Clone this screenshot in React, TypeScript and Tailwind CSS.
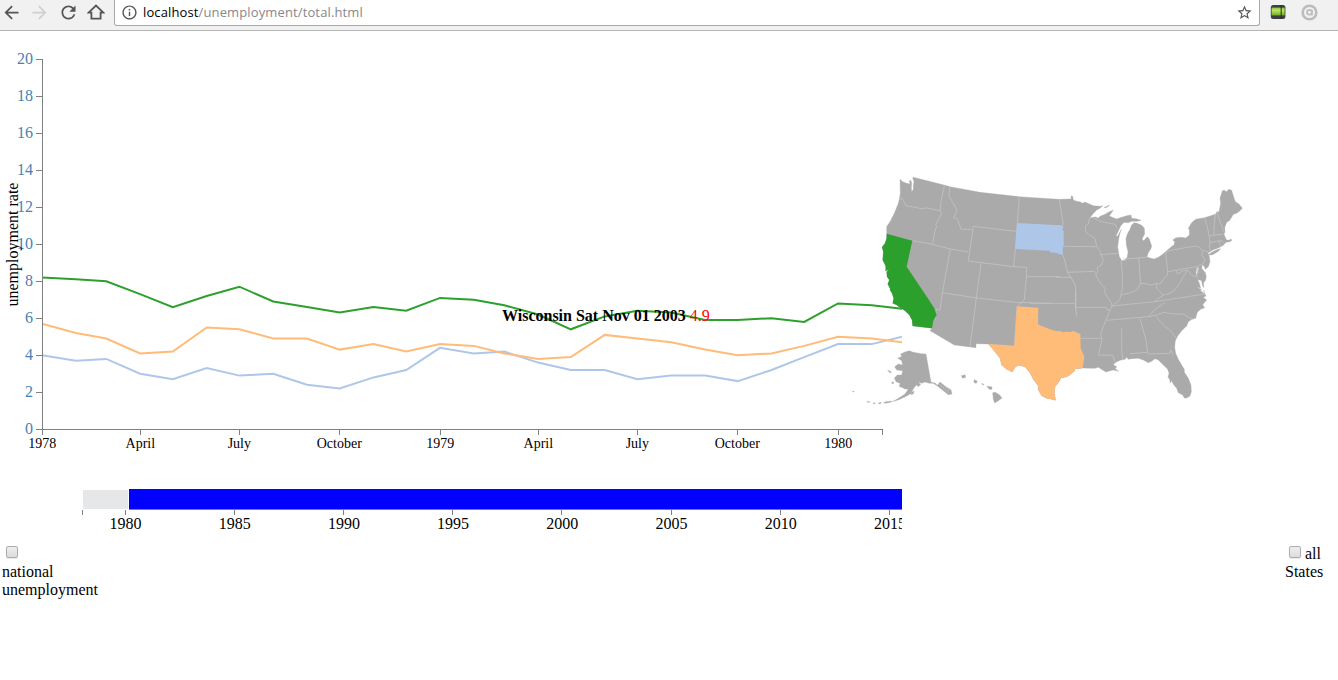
import React from "react";
import { MdArrowBack, MdArrowForward, MdRefresh, MdOutlineInfo, MdStarBorder } from "react-icons/md";

const DAY = 398 / 365;
const MONTH_DAYS = [31, 28, 31, 30, 31, 30, 31, 31, 30, 31, 30, 31];

const SERIES = [
  {
    state: "California",
    color: "#2ca02c",
    rates: [8.2, 8.1, 8.0, 7.3, 6.6, 7.2, 7.7, 6.9, 6.6, 6.3, 6.6, 6.4, 7.1, 7.0, 6.7, 6.2, 5.4, 6.1, 6.4, 6.3, 5.9, 5.9, 6.0, 5.8, 6.8, 6.7, 6.5],
  },
  {
    state: "South Dakota",
    color: "#aec7e8",
    rates: [4.0, 3.7, 3.8, 3.0, 2.7, 3.3, 2.9, 3.0, 2.4, 2.2, 2.8, 3.2, 4.4, 4.1, 4.2, 3.6, 3.2, 3.2, 2.7, 2.9, 2.9, 2.6, 3.2, 3.9, 4.6, 4.6, 5.0],
  },
  {
    state: "Texas",
    color: "#ffbb78",
    rates: [5.7, 5.2, 4.9, 4.1, 4.2, 5.5, 5.4, 4.9, 4.9, 4.3, 4.6, 4.2, 4.6, 4.5, 4.1, 3.8, 3.9, 5.1, 4.9, 4.7, 4.3, 4.0, 4.1, 4.5, 5.0, 4.9, 4.7],
  },
];

function linePath(rates: number[]) {
  let x = 42;
  return rates
    .map((r, i) => {
      const p = `${i ? "L" : "M"}${x.toFixed(1)} ${(398.2 - r * 18.5).toFixed(1)}`;
      x += MONTH_DAYS[i % 12] * DAY;
      return p;
    })
    .join("");
}

const X_TICKS: [number, string][] = [
  [42, "1978"], [140, "April"], [239, "July"], [339, "October"], [440, "1979"],
  [538, "April"], [637, "July"], [737, "October"], [838, "1980"],
];

function Chart() {
  return (
    <svg className="block h-[440px] w-[902px] shrink-0" viewBox="0 0 902 440" fontFamily="'Liberation Serif', serif">
      {SERIES.map((s) => (
        <path key={s.state} d={linePath(s.rates)} fill="none" stroke={s.color} strokeWidth="2" />
      ))}
      <path d="M42.5 28V399M42 398.5H883M882.5 398v6" stroke="#808080" fill="none" />
      {[0, 2, 4, 6, 8, 10, 12, 14, 16, 18, 20].map((v) => (
        <g key={v}>
          <path d={`M36 ${398.5 - v * 18.5}H42`} stroke="#808080" shapeRendering="crispEdges" />
          <text x="33" y={403 - v * 18.5} textAnchor="end" fontSize="16" fill="#4682b4">{v}</text>
        </g>
      ))}
      {X_TICKS.map(([x, label]) => (
        <g key={x}>
          <path d={`M${x + 0.5} 398v6`} stroke="#808080" />
          <text x={x + 0.3} y="417" textAnchor="middle" fontSize="14">{label}</text>
        </g>
      ))}
      <text transform="translate(18 275.5) rotate(-90)" fontSize="16">unemployment rate</text>
    </svg>
  );
}

type Piece = [number, number, string];

// Every map piece is stored with its own origin; this joins them into one point list.
function join(pieces: Piece[]) {
  return pieces
    .map(([dx, dy, pts]) =>
      pts.trim().split(/\s+/).map((p) => {
        const [x, y] = p.split(",").map(Number);
        return `${x + dx},${y + dy}`;
      }).join(" ")
    )
    .join(" ");
}

const CA_SOUTH = "246,115 188,108 186,90 178,75 165,62 150,53 140,45 128,40 131,25 126,10 120,0";
const CA_NORTH = "90,385 83,372 88,360 81,350 80,335 87,328 77,333 77,318 68,300 70,275 66,262 75,250 80,235 80,221";
const TX_GULF = "158,234 145,236 135,235 134,242 128,248 115,258 97,264 95,261 85,278 75,290 73,310 77,331 65,328 50,325 35,317 25,300 25,288 10,268 0,248";
const TX_RIO = "525,230 505,226 495,232 487,246 470,238 455,225 450,205 435,185 415,162";

const COUNTRY: Piece[] = [
  [30, 0, "120,58 128,65 140,70 150,72 148,64 152,60 155,70 154,85 155,95 160,88 160,75 162,65 158,55 160,52 255,76 270,80 360,97 478,110"],
  [600, 0, `0,116 28,118 63,117 64,107 68,109 70,120 80,124 92,126 97,130 105,126 118,132 130,137 150,139 158,137 150,145 140,150 128,163 118,176
    127,172 138,171 143,175 152,168 165,163 178,155 190,150 182,162 178,168 190,173 200,177 215,172 230,167 243,165 245,175 258,176 273,181 262,184
    245,184 235,188 222,187 212,198 205,213 198,228 203,228 214,208 210,220 207,232 203,260 208,290 216,302 226,300 232,290 234,275 229,255 228,235
    232,222 240,208 245,195 252,188 262,190 275,196 283,205 284,222 276,237 281,242 292,230 298,237 305,258 302,268 295,278 291,291 300,294 312,297
    325,292 338,283 350,272 362,262 372,254 374,245 368,240 378,233 395,232 408,234 418,225 418,210 415,205 425,188 437,178 463,173 496,163 501,155
    507,155 512,130 510,115 517,92 523,91 530,95 536,88 545,91 550,108 556,125 567,132 577,145 570,152 560,160 550,163 545,172 538,182 530,187
    524,203 525,215 522,222 525,230 530,240 538,241 541,237 546,240 540,245 528,247 520,256 505,264 490,269 482,274 474,279 478,290 480,305 475,320
    466,328 462,318 457,315 455,325 466,338 469,350 466,362 461,367 461,383 457,375 455,362 443,358 441,342 447,322 440,325 438,340 444,360 448,370 452,385
    440,380 455,390 450,390 463,402`],
  [540, 390, `521,0 524,10 528,18 520,22 530,30 523,38 518,45 524,53 512,58 502,67 497,85 487,87 475,95 470,108 455,122 443,138 436,152 434,172 437,190
    445,208 458,230 463,238 463,247 475,265 483,285 484,305 480,318 470,324 463,324 458,315 445,308 440,295 430,283 425,272 420,280 420,270 414,262
    417,250 413,238 400,225 385,210 375,206 365,214 355,218 340,210 325,205 305,206 295,208 290,202 285,208 270,211 255,218 250,225 260,230 256,236
    266,244 250,240 238,243 228,246 218,240 205,232 195,235 180,235 ${TX_GULF}`],
  [0, 390, `${TX_RIO} 378,161 378,173 313,165 240,122 ${CA_SOUTH}`],
  [30, 0, `${CA_NORTH} 80,200 90,185 103,160 115,130 118,118 121,100`],
];

const CALIFORNIA: Piece[] = [
  [30, 0, "80,221 157,242 140,320"],
  [0, 390, `235,27 253,55 260,75 250,92 ${CA_SOUTH}`],
  [30, 0, CA_NORTH],
];

const SOUTH_DAKOTA: Piece[] = [
  [30, 0, "471,189 600,196"],
  [600, 0, "38,196 40,205 36,208 41,213 41,258 38,265 39,285 30,283 20,279 0,277"],
  [30, 0, "570,275 570,272 466,267"],
];

const TEXAS: Piece[] = [
  [0, 390, "501,49 565,53 564,103 575,108 600,118"],
  [540, 390, `80,124 90,123 100,127 108,125 120,126 130,123 151,132 152,175 163,200 ${TX_GULF}`],
  [0, 390, `${TX_RIO} 430,163 493,167`],
];

const BORDERS: Piece[] = [
  [30, 0, "253,78 243,125 241,152"],
  [30, 0, "118,113 128,118 138,137 160,141 185,146 200,144 241,152"],
  [30, 0, "241,152 245,160 236,178 227,193 230,200 224,215 218,250"],
  [30, 0, "270,80 267,108 275,122 290,148 288,160 280,173 292,176 303,208 335,208"],
  [30, 0, "157,242 218,253 271,267 325,276"],
  [30, 0, "468,214 340,199 325,303 461,320 500,322 499,350 600,350"],
  [30, 0, "478,110 472,190 466,267 461,320"],
  [30, 0, "271,267 247,398 240,450 228,447 226,478"],
  [30, 0, "363,310 349,414 330,560"],
  [30, 0, "247,398 349,414 470,427 570,430"],
  [30, 0, "499,350 493,420 471,440 463,557"],
  [600, 0, "28,118 33,150 36,170 40,195"],
  [600, 0, "41,259 126,260 140,260"],
  [600, 0, "39,285 45,305 52,337 68,360 77,378 77,450"],
  [600, 0, "52,337 133,334 137,340"],
  [600, 0, "18,352 66,352"],
  [600, 0, "118,176 116,190 106,198 107,215 118,225 135,235 138,250 142,262 152,275 152,284 160,298 155,315 142,322 143,335 137,345 150,368 165,385 165,400 185,430 187,440"],
  [600, 0, "152,284 205,280"],
  [600, 0, "127,172 150,184 175,189 195,193 201,205"],
  [600, 0, "213,300 218,350 217,385 213,405 209,420 190,435"],
  [600, 0, "220,297 266,294 291,291"],
  [600, 0, "266,294 272,370"],
  [600, 0, "213,405 235,400 250,395 262,388 272,370 290,372 305,376 318,370 330,372 340,358 352,345 353,335 347,278"],
  [600, 0, "347,278 360,271 436,258 448,262 458,272 455,285 465,298 458,312 440,320"],
  [600, 0, "353,335 440,320 446,340"],
  [600, 0, "458,270 478,277"],
  [600, 0, "463,173 472,200 477,225 480,248 478,262 482,274"],
  [600, 0, "496,163 493,190 491,225"],
  [600, 0, "501,155 510,185 522,215"],
  [600, 0, "478,228 520,222"],
  [600, 0, "480,248 515,241 520,250"],
  [600, 0, "507,243 511,260"],
  [600, 0, "380,331 382,342 398,333 412,330 425,345 440,352"],
  [600, 0, "412,332 400,350 390,368 375,390 360,400 340,405 320,385 318,370"],
  [600, 0, "340,405 315,423"],
  [540, 390, "244,48 375,35 525,12"],
  [540, 390, "247,45 240,60 228,90 212,130 216,150 205,195 248,196 255,215"],
  [540, 390, "230,91 355,80 378,76 400,67 432,72 460,72 475,82 490,88"],
  [540, 390, "355,80 375,58 405,38"],
  [540, 390, "378,80 400,105 425,125 438,145"],
  [540, 390, "330,86 348,150 353,190"],
  [540, 390, "275,115 275,180 278,210"],
  [540, 390, "300,191 350,187 355,192 420,190 422,180 430,195"],
  [540, 390, "152,145 214,145"],
  [540, 390, "137,0 137,52 140,80"],
  [540, 390, "137,52 228,52 232,60 240,60"],
  [540, 390, "0,40 136,40"],
];

const PACIFIC = [
  "143,204 155,200 152,192 165,186 178,182 190,187 215,191 228,192 243,277 255,279 262,286 270,276 285,288 303,300 306,312 295,314 280,302 265,290 250,280 238,280 225,276 215,280 205,276 212,284 204,290 200,284 190,296 183,310 170,318 150,328 128,335 150,322 165,312 175,298 165,297 155,292 148,290 150,280 138,275 133,264 142,255 155,255 158,242 140,240 134,230 145,222 158,225 155,212",
  "113,241 122,244 124,249 118,247",
  "125,277 131,276 130,281 126,281",
  "182,309 192,302 191,310 185,315",
  "101,338 108,335 127,333 122,337 106,340",
  "86,338 93,337 92,341 86,341",
  "70,338 76,339 75,341 70,341",
  "51,334 59,335 59,337 52,337",
  "8,304 12,304 12,306 8,306",
  "334,257 345,254 347,262 338,265",
  "372,269 382,273 379,280 372,278",
  "395,280 402,283 399,286",
  "411,288 426,291 426,298 417,298",
  "428,308 436,307 449,315 456,324 445,332 434,339 430,328",
];

function StateMap() {
  return (
    <svg className="-ml-[52px] mt-[129px] block h-[260px] w-[420px] shrink-0" viewBox="0 0 1260 780">
      <g fill="#aaaaaa" stroke="#aaaaaa" strokeWidth="1" strokeLinejoin="round">
        <polygon points={join(COUNTRY)} />
        <polygon points="1073,286 1085,277 1098,270 1112,266 1105,274 1088,284" />
        <polygon points="762,142 768,140 779,135 774,140 766,143" />
        {PACIFIC.map((p) => <polygon key={p} points={join([[0, 390, p]])} />)}
      </g>
      <g fill="none" stroke="#c4c4c4" strokeWidth="2.3">
        {BORDERS.map((b) => <polyline key={b[2]} points={join([b])} />)}
      </g>
      <path d="M265 670l33 30M275 669l24 24" stroke="#fff" strokeWidth="1.2" strokeDasharray="5 4" />
      <polygon points={join(CALIFORNIA)} fill="#2ca02c" />
      <polygon points={join(SOUTH_DAKOTA)} fill="#aec7e8" />
      <polygon points={join(TEXAS)} fill="#ffbb78" />
    </svg>
  );
}

function RangeSlider() {
  return (
    <svg className="block h-[64px] w-[902px]" viewBox="0 0 902 64" fontFamily="'Liberation Serif', serif">
      <rect x="83" y="15" width="45" height="19" fill="#e6e7e8" />
      <rect x="129" y="14" width="773" height="20" fill="#0000ff" />
      <path d="M129 34.5H902M82.5 35v5" stroke="#808080" />
      {[1980, 1985, 1990, 1995, 2000, 2005, 2010, 2015].map((year, i) => (
        <g key={year}>
          <path d={`M${Math.floor(125 + i * 109.2) + 0.5} 35v5`} stroke="#808080" />
          <text x={125.5 + i * 109.2} y="54" textAnchor="middle" fontSize="16">{year}</text>
        </g>
      ))}
    </svg>
  );
}

function Check({ label }: { label: string }) {
  return (
    <input
      type="checkbox"
      aria-label={label}
      className="block h-[12px] w-[12px] appearance-none rounded-[2px] border border-[#adadad] bg-linear-to-b from-[#eeeeee] to-[#dcdcdc] shadow-[0_1px_1px_#e8e8e8]"
    />
  );
}

function Toolbar() {
  return (
    <header className="flex h-[31px] items-start border-b border-[#b4b4b4] bg-[#f1f1f1] text-[#555555]">
      <nav className="flex h-6 w-[114px] shrink-0 items-center pl-[1px]">
        <MdArrowBack size={21} />
        <MdArrowForward size={21} className="ml-[7px] text-[#d0d0d0]" />
        <MdRefresh size={21} className="ml-[8px]" />
        <svg className="ml-[8px] h-[16px] w-[18px]" viewBox="0 0 18 16" fill="none" stroke="currentColor" strokeWidth="1.8">
          <path d="M1.6 8.6L9 1.5l7.4 7.1H13.6V14.6H4.4V8.6z" />
        </svg>
      </nav>
      <div className="flex h-[26px] w-[1146px] shrink-0 items-start rounded-b-[3px] border border-t-0 border-[#a9a9a9] bg-white px-[6px]">
        <div className="flex h-6 w-full items-center">
          <MdOutlineInfo size={17} />
          <span className="ml-[5px] font-['Open_Sans',sans-serif] text-[13px] leading-6 tracking-[0.125px] text-[#888888]">
            <span className="text-black">localhost</span>/unemployment/total.html
          </span>
          <MdStarBorder size={17} className="ml-auto" />
        </div>
      </div>
      <div className="flex h-6 items-center pl-[10px]">
        <svg className="h-[16px] w-[16px]" viewBox="0 0 16 16">
          <defs>
            <linearGradient id="can" x1="0" y1="0" x2="0" y2="1">
              <stop offset="0" stopColor="#8fbf45" />
              <stop offset=".35" stopColor="#b8e860" />
              <stop offset="1" stopColor="#76ad2c" />
            </linearGradient>
          </defs>
          <rect x=".8" y="1" width="14.6" height="14" rx="2.5" fill="#3a4043" />
          <rect x="1.6" y="3.6" width="13" height="7.8" fill="url(#can)" />
          <path d="M11.2 1v14" stroke="#23300f" strokeWidth="1" />
        </svg>
        <svg className="ml-[15px] h-[17px] w-[17px]" viewBox="0 0 17 17" fill="none" stroke="#bcbcbc">
          <circle cx="8.5" cy="8.5" r="6.8" strokeWidth="2.6" />
          <circle cx="8.5" cy="8.2" r="2.4" strokeWidth="1.8" />
          <path d="M10.9 6v5.4" strokeWidth="1.7" />
        </svg>
      </div>
    </header>
  );
}

export default function App() {
  return (
    <div className="h-[680px] w-[1338px] overflow-hidden bg-white font-['Liberation_Serif',serif] text-[16px] leading-[18px] text-black">
      <Toolbar />
      <main>
        <section className="relative flex h-[444px]">
          <Chart />
          <StateMap />
          <p className="absolute left-[502px] top-[276px] whitespace-nowrap">
            <b>Wisconsin Sat Nov 01 2003</b> <span className="text-[#ff0000]">4.9</span>
          </p>
        </section>
        <RangeSlider />
        <footer className="flex justify-between pl-[2px] pr-[14px] pt-[6px]">
          <label className="flex flex-col">
            <span className="flex h-[18px] items-start pl-[4px] pt-[1px]"><Check label="national unemployment" /></span>
            <span>national</span>
            <span>unemployment</span>
          </label>
          <label className="flex w-[39px] flex-col">
            <span className="flex h-[18px] items-start pl-[4px]">
              <span className="mt-[1px]"><Check label="all States" /></span>
              <span className="ml-[4px]">all</span>
            </span>
            <span>States</span>
          </label>
        </footer>
      </main>
    </div>
  );
}
